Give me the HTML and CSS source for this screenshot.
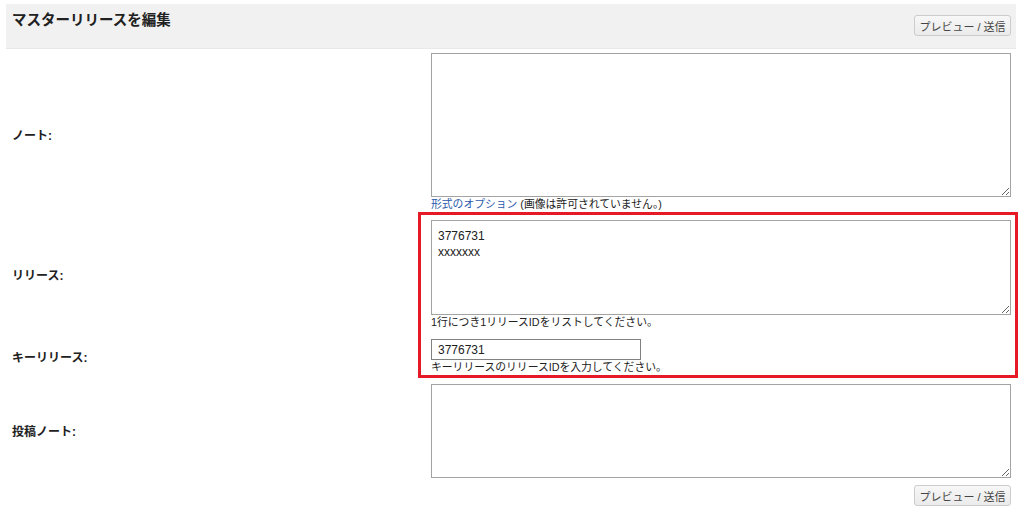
FILE: index.html
```html
<!DOCTYPE html>
<html lang="ja">
  <head>
    <meta charset="utf-8" />
    <title>マスターリリースを編集</title>
    <link rel="stylesheet" href="styles.css">
  </head>
  <body>
    <main id="page">
      <header class="titleBar">
        <h3>マスターリリースを編集</h3>
        <button type="button" class="submitButton">プレビュー / 送信</button>
      </header>
      <form class="editForm">
        <div class="row noteRow">
          <label class="rowLabel" for="notes">ノート:</label>
          <div class="field">
            <textarea id="notes" class="notesArea"></textarea>
            <p class="help"><a href="#">形式のオプション</a> (画像は許可されていません。)</p>
          </div>
        </div>
        <div class="row releaseRow">
          <label class="rowLabel" for="releases">リリース:</label>
          <div class="field">
            <textarea id="releases" class="releasesArea">3776731
xxxxxxx</textarea>
            <p class="help">1行につき1リリースIDをリストしてください。</p>
          </div>
        </div>
        <div class="row keyRow">
          <label class="rowLabel" for="keyRelease">キーリリース:</label>
          <div class="field">
            <input type="text" id="keyRelease" value="3776731" />
            <p class="help">キーリリースのリリースIDを入力してください。</p>
          </div>
        </div>
        <div class="row submitNoteRow">
          <label class="rowLabel" for="submitNotes">投稿ノート:</label>
          <div class="field">
            <textarea id="submitNotes" class="submitNotesArea"></textarea>
          </div>
        </div>
        <div class="buttonRow">
          <button type="button" class="submitButton">プレビュー / 送信</button>
        </div>
      </form>
      <div class="highlight"></div>
    </main>
  </body>
</html>
```

FILE: styles.css
```css
* {
  box-sizing: border-box;
  font-family: "Liberation Sans", "Noto Sans CJK JP", sans-serif;
  color: hsl(0, 0%, 13%);
}
html,
body {
  margin: 0;
  background-color: white;
}
#page {
  position: relative;
  padding: 4px 8px 0 6px;
}
.titleBar {
  display: flex;
  justify-content: space-between;
  align-items: flex-start;
  height: 45px;
  padding: 0 5px 0 6px;
  border-bottom: 1px solid hsl(0, 0%, 91%);
  background-color: hsl(0, 0%, 94.5%);
}
h3 {
  margin: 5px 0 0;
  font-size: 14.5px;
  line-height: 22px;
  font-weight: bold;
}
.submitButton {
  width: 97px;
  height: 21px;
  margin-top: 11px;
  padding: 0;
  border: 1px solid hsl(0, 0%, 80%);
  border-radius: 3px;
  background: linear-gradient(hsl(0, 0%, 97%), hsl(0, 0%, 92%));
  color: hsl(0, 0%, 27%);
  font-size: 11px;
  cursor: pointer;
}
.editForm {
  padding-left: 6px;
}
.row {
  display: flex;
  align-items: center;
}
.rowLabel {
  width: 419px;
  padding-top: 7px;
  font-size: 12px;
  font-weight: bold;
}
.field {
  width: 580px;
}
textarea,
input {
  display: block;
  width: 100%;
  margin: 0;
  padding: 4px 6px;
  border: 1px solid hsl(0, 0%, 64%);
  font-size: 12px;
  line-height: 16px;
}
.noteRow .field {
  margin-top: 4px;
}
.notesArea {
  height: 144px;
}
.releaseRow .field {
  margin-top: 8px;
}
.releasesArea {
  height: 95px;
  padding-top: 7px;
}
.keyRow .field {
  margin-top: 9px;
}
#keyRelease {
  width: 210px;
  height: 21px;
  padding: 1px 6px;
  border-color: hsl(0, 0%, 50%);
}
.submitNoteRow .field {
  margin-top: 9px;
}
.submitNotesArea {
  height: 94px;
}
.help {
  margin: 0;
  font-size: 10.8px;
  line-height: 15px;
}
.help a {
  color: hsl(218, 60%, 42%);
  text-decoration: none;
}
.buttonRow {
  display: flex;
  justify-content: flex-end;
  width: 999px;
  margin-top: 7px;
}
.buttonRow .submitButton {
  margin-top: 0;
}
/* red frame drawn around the release fields */
.highlight {
  position: absolute;
  left: 418px;
  top: 212px;
  width: 600px;
  height: 166px;
  border: 3px solid hsl(356, 80%, 50%);
  pointer-events: none;
}
```
